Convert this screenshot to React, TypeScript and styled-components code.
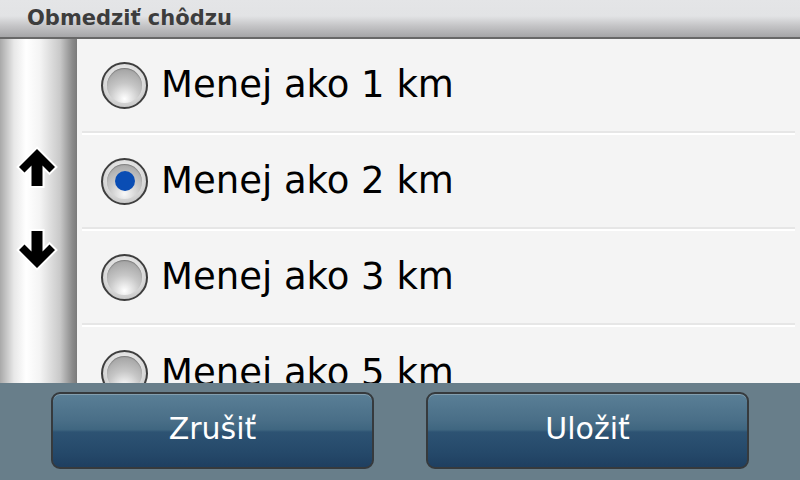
import React, {useState} from 'react';
import styled, {createGlobalStyle} from 'styled-components';

const GlobalStyle = createGlobalStyle`
  html, body {
    margin: 0;
    padding: 0;
    width: 800px;
    height: 480px;
    overflow: hidden;
    font-family: "DejaVu Sans", Verdana, sans-serif;
  }
`;

const options = ['Menej ako 1 km', 'Menej ako 2 km', 'Menej ako 3 km', 'Menej ako 5 km'];

export default function App() {
  const [selected, setSelected] = useState(1);

  return (
    <Screen>
      <GlobalStyle/>
      {/* Title bar */}
      <TitleBar>
        <Title>Obmedziť chôdzu</Title>
      </TitleBar>

      {/* List with scroll strip */}
      <Body>
        <ScrollStrip>
          <ArrowButton aria-label="hore">
            <Arrow dir="up"/>
          </ArrowButton>
          <ArrowButton aria-label="dole">
            <Arrow dir="down"/>
          </ArrowButton>
        </ScrollStrip>
        <List>
          {options.map((label, i) => (
            <Row key={label} onClick={() => setSelected(i)}>
              <Radio $checked={i === selected}/>
              <Label>{label}</Label>
            </Row>
          ))}
        </List>
      </Body>

      {/* Bottom buttons */}
      <ButtonBar>
        <ActionButton>Zrušiť</ActionButton>
        <ActionButton>Uložiť</ActionButton>
      </ButtonBar>
    </Screen>
  );
}

function Arrow({dir}: {dir: 'up' | 'down'}) {
  return (
    <svg width="44" height="42" viewBox="0 0 44 42"
         style={{transform: dir === 'down' ? 'rotate(180deg)' : undefined}}>
      <path d="M22 3 L40 21 L34.5 26.5 L27.5 19.5 L27.5 40 L16.5 40 L16.5 19.5 L9.5 26.5 L4 21 Z"
            fill="#000" stroke="#fff" strokeWidth="4" strokeLinejoin="miter"
            paintOrder="stroke"/>
    </svg>
  );
}

const Screen = styled.div`
  width: 800px;
  height: 480px;
  display: flex;
  flex-direction: column;
  background: #f4f4f4;
`;

const TitleBar = styled.div`
  height: 37px;
  flex: none;
  display: flex;
  align-items: center;
  padding-left: 27px;
  background: linear-gradient(to bottom, #e4e5e7 0px, #e2e3e5 16px, #c4c4c6 26px, #a6a6a8 37px);
  border-bottom: 2px solid #686868;
`;

const Title = styled.h1`
  margin: 0 0 2px;
  font-size: 21px;
  font-weight: bold;
  color: #3d3d3d;
`;

const Body = styled.div`
  flex: 1;
  display: flex;
  overflow: hidden;
`;

const ScrollStrip = styled.div`
  width: 77px;
  flex: none;
  display: flex;
  flex-direction: column;
  align-items: center;
  padding-top: 107px;
  gap: 41px;
  background: linear-gradient(to right, #a9a9a9 0px, #e8e8e8 14px, #ffffff 26px, #f4f4f4 40px, #c9c9c9 60px, #8c8c8c 72px, #7a7a7a 77px);
`;

const ArrowButton = styled.div`
  width: 44px;
  height: 42px;
  margin-right: 3px;
`;

const List = styled.div`
  flex: 1;
  display: flex;
  flex-direction: column;
  padding: 0 5px 0 5px;
`;

const Row = styled.div`
  height: 92px;
  flex: none;
  display: flex;
  align-items: center;
  gap: 13px;
  padding-left: 19px;
  border-bottom: 2px solid #e6e6e6;
  box-shadow: 0 2px 0 #ffffff;
  margin-bottom: 2px;
  cursor: pointer;
`;

const Radio = styled.span<{$checked: boolean}>`
  position: relative;
  width: 43px;
  height: 43px;
  flex: none;
  border-radius: 50%;
  border: 2px solid #3e3e3e;
  background: radial-gradient(circle at 50% 40%, #ffffff 0%, #d8d8d8 60%, #b4b4b4 100%);

  &::before {
    content: '';
    position: absolute;
    inset: 4px;
    border-radius: 50%;
    background: ${p => p.$checked
      ? 'radial-gradient(circle at 50% 85%, #f8f8f8 0%, #c9c9c9 45%, #9c9c9c 100%)'
      : 'radial-gradient(circle at 50% 88%, #ffffff 0%, #c6c6c6 45%, #979797 100%)'};
    box-shadow: inset 0 1px 1px rgba(0, 0, 0, 0.25);
  }

  &::after {
    content: '';
    display: ${p => p.$checked ? 'block' : 'none'};
    position: absolute;
    left: 11.5px;
    top: 11.5px;
    width: 20px;
    height: 20px;
    border-radius: 50%;
    background: #0a4db4;
  }
`;

const Label = styled.span`
  font-size: 37px;
  color: #000;
  white-space: nowrap;
  margin-top: -2px;
`;

const ButtonBar = styled.div`
  height: 97px;
  flex: none;
  display: flex;
  justify-content: space-between;
  align-items: center;
  padding: 0 51px;
  background: #687e8a;
`;

const ActionButton = styled.button`
  width: 323px;
  height: 77px;
  margin-top: -2px;
  border: 2px solid #363a3d;
  border-radius: 9px;
  background: linear-gradient(to bottom, #5a7f96 0%, #4a6f88 35%, #3f6680 49%, #2d5373 52%, #25496a 80%, #1f3f60 100%);
  box-shadow: inset 0 1px 0 rgba(255, 255, 255, 0.25);
  color: #ffffff;
  font-family: "DejaVu Sans", Verdana, sans-serif;
  font-size: 30px;
  padding: 0 0 4px;
  cursor: pointer;
`;
